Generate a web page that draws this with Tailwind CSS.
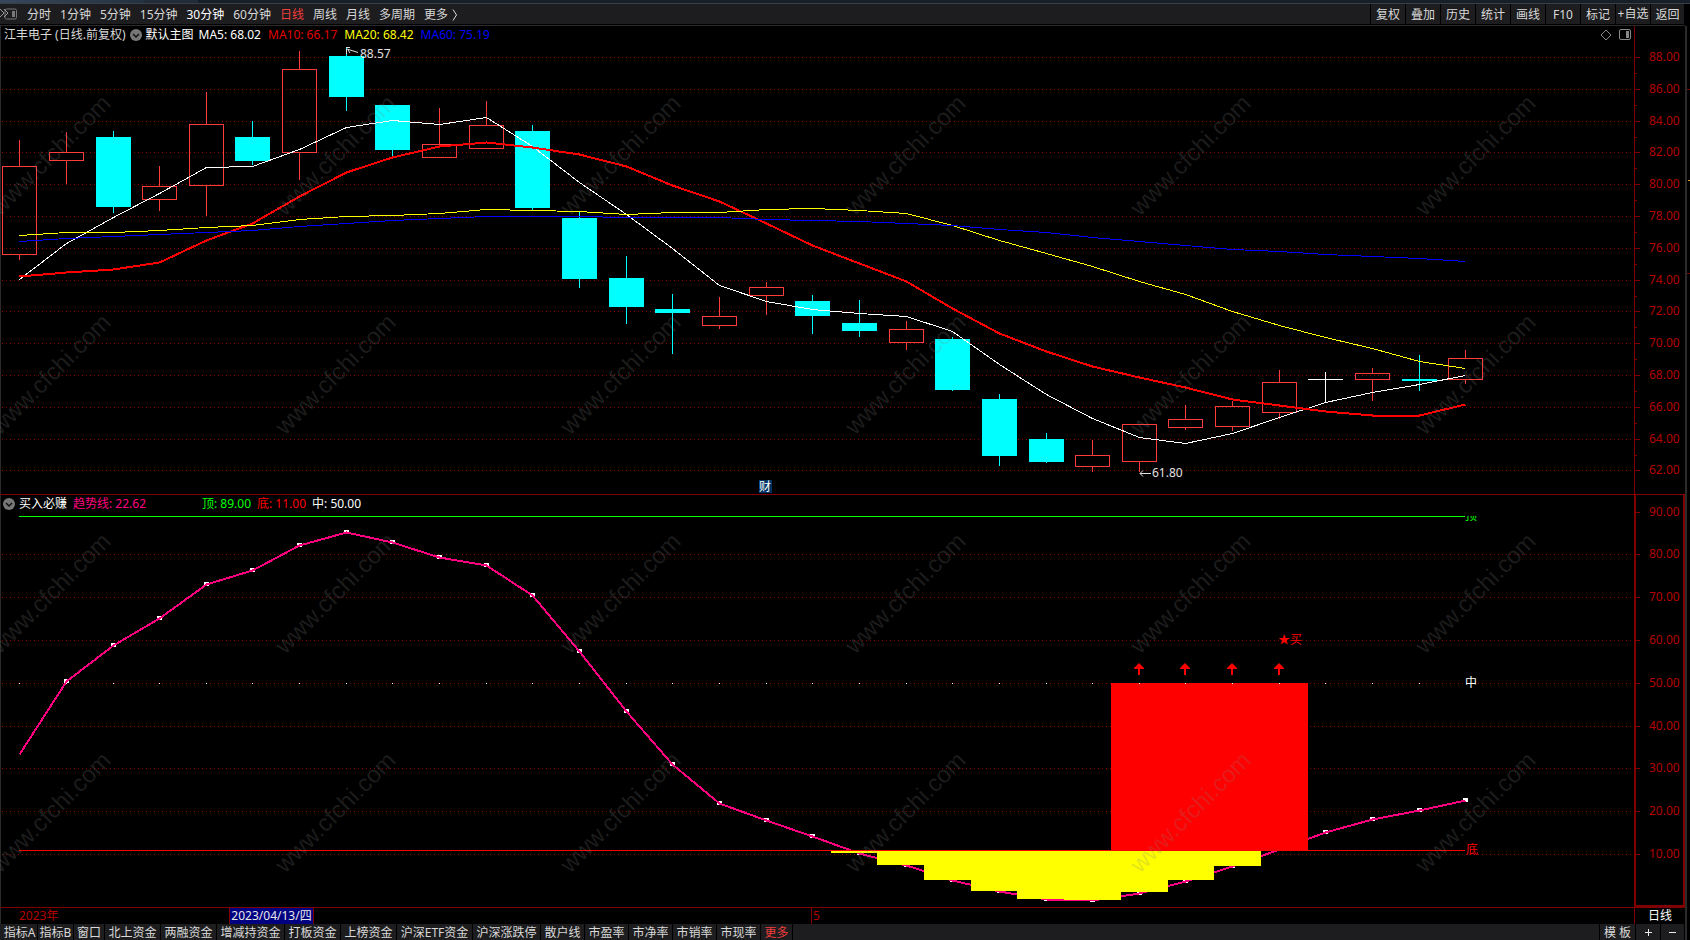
<!DOCTYPE html>
<html lang="zh-CN">
<head>
<meta charset="utf-8">
<title>江丰电子 日线</title>
<script src="https://cdn.jsdelivr.net/npm/@tailwindcss/browser@4"></script>
</head>
<body class="flex h-screen flex-col overflow-hidden bg-black font-['Noto_Sans','Noto_Sans_CJK_SC',sans-serif] text-xs text-[#d8d8d8]">
<div class="flex h-[3px] shrink-0 bg-[#161e27]">
  <div class="w-36 bg-linear-to-r from-[#38465a] to-[#243240]"></div>
  <div class="w-[54px] bg-[#222c38]"></div>
</div>
<div class="flex min-h-0 flex-1 border-t border-[#35404a]">
  <div class="flex min-w-0 flex-1 flex-col">
    <header class="mb-px flex h-5 shrink-0 items-stretch justify-between overflow-hidden bg-[#1d1d1f] leading-[22px]">
      <nav class="flex items-start gap-[9px] whitespace-nowrap" aria-label="周期">
        <button class="mt-1 mr-px h-3 w-[17px]" aria-label="侧栏">
          <svg class="block" width="17" height="12" viewBox="0 0 17 12" fill="none"><rect x="5" y="1" width="11.500" height="10" rx="1.500" stroke="#777"/><rect x="12" y="3" width="3" height="6" fill="#777"/><path d="M0 1l4 4-4 4M4 1l4 4-4 4" stroke="#999"/></svg>
        </button>
        <button>分时</button><button>1分钟</button><button>5分钟</button><button>15分钟</button><button class="text-white">30分钟</button><button>60分钟</button><button class="text-[#f03c3c]">日线</button><button>周线</button><button>月线</button><button>多周期</button>
        <button class="flex items-center gap-1">更多 <svg width="6" height="12" viewBox="0 0 6 12" fill="none" stroke="#d8d8d8"><path d="M1 .5L4.500 6 1 11.500"/></svg></button>
      </nav>
      <div class="flex items-stretch whitespace-nowrap">
        <button class="w-[35px] border-l border-black">复权</button><button class="w-[35px] border-l border-black">叠加</button><button class="w-[35px] border-l border-black">历史</button><button class="w-[35px] border-l border-black">统计</button><button class="w-[35px] border-l border-black">画线</button><button class="w-[35px] border-l border-black">F10</button><button class="w-[35px] border-l border-black">标记</button><button class="flex w-[35px] items-center justify-center border-l border-black">+自选</button><button class="w-[35px] border-x border-black">返回</button>
      </div>
    </header>
    <main class="relative flex min-h-0 flex-1 flex-col border-t border-[#2b2b2b]">
      <section class="flex min-h-0 flex-[468]" aria-label="主图">
        <div class="flex min-w-0 flex-1 flex-col border-l border-[#2b2b2b]">
          <div class="flex h-[18px] shrink-0 items-center gap-[7px] pr-[3px] pl-[3px] leading-[18px] whitespace-nowrap">
            <div class="-mr-0.5 flex items-center gap-1">
              <span>江丰电子 (日线.前复权)</span>
              <button aria-label="主图菜单"><svg class="block" width="12" height="12" viewBox="0 0 12 12"><circle cx="6" cy="6" r="6" fill="#777"/><path d="M3 5l3 3 3-3" fill="none" stroke="#111" stroke-width="1.500"/></svg></button>
              <span class="text-white">默认主图</span>
            </div>
            <span class="text-white">MA5: 68.02</span><span class="text-[#e00000]">MA10: 66.17</span><span class="text-[#ffff00]">MA20: 68.42</span><span class="text-[#0000ff]">MA60: 75.19</span>
            <button class="ml-auto" aria-label="标记点"><svg class="block" width="12" height="12" viewBox="0 0 12 12" fill="none" stroke="#888"><path d="M6 1l5 5-5 5-5-5z"/></svg></button>
            <button aria-label="右侧栏"><svg class="block" width="12" height="12" viewBox="0 0 12 12"><rect x=".5" y=".5" width="11" height="10" rx="1.500" fill="none" stroke="#888"/><rect x="7" y="2" width="3" height="7" fill="#888"/></svg></button>
          </div>
          <svg id="price" class="block min-h-0 w-full flex-1" viewBox="1 44 1633 450" preserveAspectRatio="none"></svg>
        </div>
        <svg id="priceAxis" class="block h-full w-[51px] shrink-0" viewBox="1634 26 51 468" preserveAspectRatio="none"></svg>
      </section>
      <section class="flex min-h-0 flex-[412] border-t border-[#800000]" aria-label="指标">
        <div class="flex min-w-0 flex-1 flex-col border-l border-[#2b2b2b]">
          <div class="flex h-[18px] shrink-0 items-center gap-1.5 pl-0.5 leading-[18px] whitespace-nowrap">
            <button class="-mr-0.5" aria-label="指标菜单"><svg class="block" width="12" height="12" viewBox="0 0 12 12"><circle cx="6" cy="6" r="6" fill="#777"/><path d="M3 5l3 3 3-3" fill="none" stroke="#111" stroke-width="1.500"/></svg></button>
            <span class="text-white">买入必赚</span><span class="w-[123px] text-[#ff0080]">趋势线: 22.62</span><span class="text-[#00ff00]">顶: 89.00</span><span class="text-[#ff0000]">底: 11.00</span><span class="text-white">中: 50.00</span>
          </div>
          <svg id="trend" class="block min-h-0 w-full flex-1" viewBox="1 513 1633 394" preserveAspectRatio="none"></svg>
        </div>
        <svg id="trendAxis" class="block h-full w-[51px] shrink-0" viewBox="1634 495 51 412" preserveAspectRatio="none"></svg>
      </section>
      <svg id="marks" class="pointer-events-none absolute inset-0 h-full w-full" viewBox="0 26 1685 881" preserveAspectRatio="none" aria-hidden="true"></svg>
    </main>
    <div class="flex h-[17px] shrink-0 border-t border-l border-t-[#800000] border-l-[#2b2b2b] leading-4 text-[#b40000]">
      <div class="w-[228px] pl-[18px]">2023年</div>
      <div class="w-[85px] border-x border-[#800000] bg-[#000080] text-center whitespace-nowrap text-[#e8e8e8]">2023/04/13/四</div>
      <div class="w-[497px]"></div>
      <div class="border-l border-[#800000] pl-px">5</div>
      <div class="ml-auto w-[51px] border-l border-[#800000] text-center text-white">日线</div>
    </div>
    <footer class="flex h-4 shrink-0 overflow-hidden bg-[#1d1d1f] pl-0.5 leading-[18px] whitespace-nowrap">
      <button class="w-9 border-r border-black">指标A</button><button class="w-9 border-r border-black">指标B</button><button class="w-[31px] border-r border-black">窗口</button><button class="w-14 border-r border-black">北上资金</button><button class="w-14 border-r border-black">两融资金</button><button class="w-[68px] border-r border-black">增减持资金</button><button class="w-14 border-r border-black">打板资金</button><button class="w-14 border-r border-black">上榜资金</button><button class="w-[76px] border-r border-black">沪深ETF资金</button><button class="w-[68px] border-r border-black">沪深涨跌停</button><button class="w-11 border-r border-black">散户线</button><button class="w-11 border-r border-black">市盈率</button><button class="w-11 border-r border-black">市净率</button><button class="w-11 border-r border-black">市销率</button><button class="w-11 border-r border-black">市现率</button><button class="w-8 border-r border-black text-[#f03c3c]">更多</button>
      <button class="ml-auto w-9 border-l border-black">模 板</button><button class="flex w-[25px] items-center justify-center border-l border-black" aria-label="放大"><svg width="7" height="7" viewBox="0 0 7 7" stroke="#e8e8e8"><path d="M0 3.500h7M3.500 0v7"/></svg></button><button class="flex w-[25px] items-center justify-center border-x border-black" aria-label="缩小"><svg width="7" height="7" viewBox="0 0 7 7" stroke="#e8e8e8"><path d="M0 3.500h7"/></svg></button>
    </footer>
  </div>
  <svg class="block h-full w-[5px] shrink-0" viewBox="0 4 5 936" preserveAspectRatio="none" shape-rendering="crispEdges"><path d="M0 26h2v914H0z" fill="#2b2b2b"/><path d="M2 89h3v1H2zM2 273h3v1H2z" fill="#800000"/><path d="M3 180h2v1H3z" fill="#e0a030"/></svg>
</div>
<script>
const NS = 'http://www.w3.org/2000/svg';
const add = (id, tag, attrs, text) => {
  const e = document.createElementNS(NS, tag);
  for (const k in attrs) e.setAttribute(k, attrs[k]);
  if (text !== undefined) e.textContent = text;
  document.getElementById(id).appendChild(e);
};
const box = (id, x, y, w, h, fill) => add(id, 'rect', {x, y, width: w, height: h, fill, 'shape-rendering': 'crispEdges'});
const label = (id, x, y, t, fill, size) => add(id, 'text', {x, y, fill, 'font-size': size || 12}, t);
const cx = i => Math.floor(19.7 + 46.65 * i);
const curve = (id, ys, stroke, w) => add(id, 'polyline', {points: ys.map((y, i) => (cx(i) + .5) + ',' + (y + .5)).join(' '), fill: 'none', stroke, 'stroke-width': w, 'shape-rendering': 'crispEdges'});
const grid = (id, y) => add(id, 'path', {d: `M2 ${y + .5}H1634`, stroke: '#8c0000', 'stroke-dasharray': '1 3', 'shape-rendering': 'crispEdges'});

// Price grid and axis
box('priceAxis', 1634, 26, 1, 468, '#800000');
[57, 89, 121, 152, 184, 216, 248, 280, 311, 343, 375, 407, 439, 470].forEach((y, i) => {
  grid('price', y);
  box('priceAxis', 1635, y, 5, 1, '#800000');
  if (i < 13) box('priceAxis', 1635, y + 16, 2, 1, '#800000');
  label('priceAxis', 1649, y + 4, (88 - 2 * i) + '.00', '#b40000');
});

// Candles: type, body top, body bottom, high, low
[['r',166,255,140,260],['r',152,161,132,184],['c',137,207,131,213],['r',186,200,166,211],['r',124,186,92,216],['c',137,161,121,165],['r',69,153,51,180],['c',56,97,47,111],['c',105,150,105,156],['r',144,158,108,158],['r',125,149,101,149],['c',131,208,125,210],['c',218,279,212,288],['c',278,307,256,324],['c',309,313,294,354],['r',316,326,297,329],['r',287,296,282,315],['c',301,316,295,334],['c',323,331,300,337],['r',329,343,321,350],['c',339,390,337,391],['c',399,456,394,466],['c',439,462,433,463],['r',455,467,440,472],['r',424,462,424,472],['r',419,428,405,430],['r',406,427,401,431],['r',382,413,370,419],['w',379,380,372,402],['r',373,380,368,401],['c',379,381,355,391],['r',358,380,350,384]].forEach(([t, a, b, hi, lo], i) => {
  const x = cx(i);
  if (t === 'r') {
    box('price', x, hi, 1, a - hi, '#ff3c3c');
    box('price', x, b, 1, lo - b, '#ff3c3c');
    add('price', 'rect', {x: x - 16.5, y: a + .5, width: 34, height: b - a - 1, fill: 'none', stroke: '#ff3c3c', 'shape-rendering': 'crispEdges'});
  } else {
    const f = t === 'c' ? '#00ffff' : '#ffffff';
    box('price', x, hi, 1, lo - hi, f);
    box('price', x - 17, a, 35, b - a, f);
  }
});
curve('price', [279,243,217,193,167,166,149,127,120,124,117,146,182,214,248,285,301,309,313,316,331,364,394,418,437,443,433,417,402,392,384,375], '#ffffff', 1);
curve('price', [276,272,269,262,240,223,196,172,157,146,142,147,154,166,185,201,223,245,263,281,308,333,351,366,377,387,399,405,411,415,415,404], '#ff0000', 2);
curve('price', [235,232,232,230,227,225,219,216,215,213,209,210,211,214,212,212,209,208,210,213,225,240,253,266,281,294,311,325,337,348,361,368], '#ffff00', 1);
curve('price', [241,238,236,234,232,230,226,223,220,218,216,216,216,217,217,217,219,220,221,223,225,229,232,237,241,245,249,251,254,256,258,261], '#0000ff', 1);
add('price', 'path', {d: 'M346.500 54V49M346 47.500h4M347 49l11 3.500M348 50l2 3', fill: 'none', stroke: '#e0e0e0'});
label('price', 360, 58, '88.57', '#e0e0e0');
add('price', 'path', {d: 'M1140 473.500h11M1143 470.500l-3 3 3 3', fill: 'none', stroke: '#e0e0e0'});
label('price', 1152, 477, '61.80', '#e0e0e0');
box('price', 759, 480, 13, 13, '#003264');
label('price', 759, 491, '财', '#ffffff');

// Indicator grid and axis
box('trendAxis', 1634, 495, 2, 412, '#800000');
box('trendAxis', 1683, 495, 2, 412, '#800000');
box('trendAxis', 1634, 905, 51, 2, '#800000');
[512, 554, 597, 640, 683, 726, 768, 811, 854].forEach((y, i) => {
  if (i) grid('trend', y);
  box('trendAxis', 1636, y, 4, 1, '#800000');
  label('trendAxis', 1649, y + 4, (90 - 10 * i) + '.00', '#b40000');
});
const trend = [754,681,645,618,584,570,545,532,542,557,565,595,651,711,764,803,820,836,853,865,880,891,899,900,893,881,866,849,832,819,810,800];
trend.forEach((y, i) => { if (i) box('trend', cx(i) - 2, y - 2, 5, 4, '#ffffff'); });
curve('trend', trend, '#ff0080', 2);
box('trend', 1111, 683, 197, 167, '#ff0000');
[[831,877,853],[877,924,865],[924,971,880],[971,1017,891],[1017,1064,899],[1064,1121,900],[1121,1168,892],[1168,1214,880],[1214,1261,866]].forEach(([a, b, y]) => box('trend', a, 851, b - a, y - 851, '#ffff00'));
box('trend', 19, 516, 1446, 1, '#00ff00');
box('trend', 19, 850, 1446, 1, '#ff0000');
for (let i = 0; i < 31; i++) box('trend', cx(i), 683, 1, 1, '#ffffff');
[24, 25, 26, 27].forEach(i => add('trend', 'path', {d: `M${cx(i)} 663l5 5v1h-4v6h-2v-6h-4v-1z`, fill: '#ff0000'}));
label('trend', 1278, 644, '★买', '#ff0000');
label('trend', 1465, 687, '中', '#ffffff');
label('trend', 1466, 854, '底', '#ff0000');
add('trend', 'clipPath', {id: 'topCut'});
const cut = document.createElementNS(NS, 'rect');
for (const [k, v] of [['x', 1465], ['y', 516], ['width', 14], ['height', 5]]) cut.setAttribute(k, v);
document.getElementById('topCut').appendChild(cut);
add('trend', 'text', {x: 1465, y: 520, fill: '#00ff00', 'font-size': 12, 'clip-path': 'url(#topCut)'}, '顶');

// Watermarks
for (const y of [217, 436, 655, 874]) for (let c = 0; c < 6; c++)
  add('marks', 'text', {transform: `translate(${285 * c} ${y}) rotate(-45)`, fill: '#808080', 'fill-opacity': .22, 'font-size': 24, 'font-family': 'Liberation Sans, sans-serif'}, 'www.cfchi.com');
</script>
</body>
</html>
